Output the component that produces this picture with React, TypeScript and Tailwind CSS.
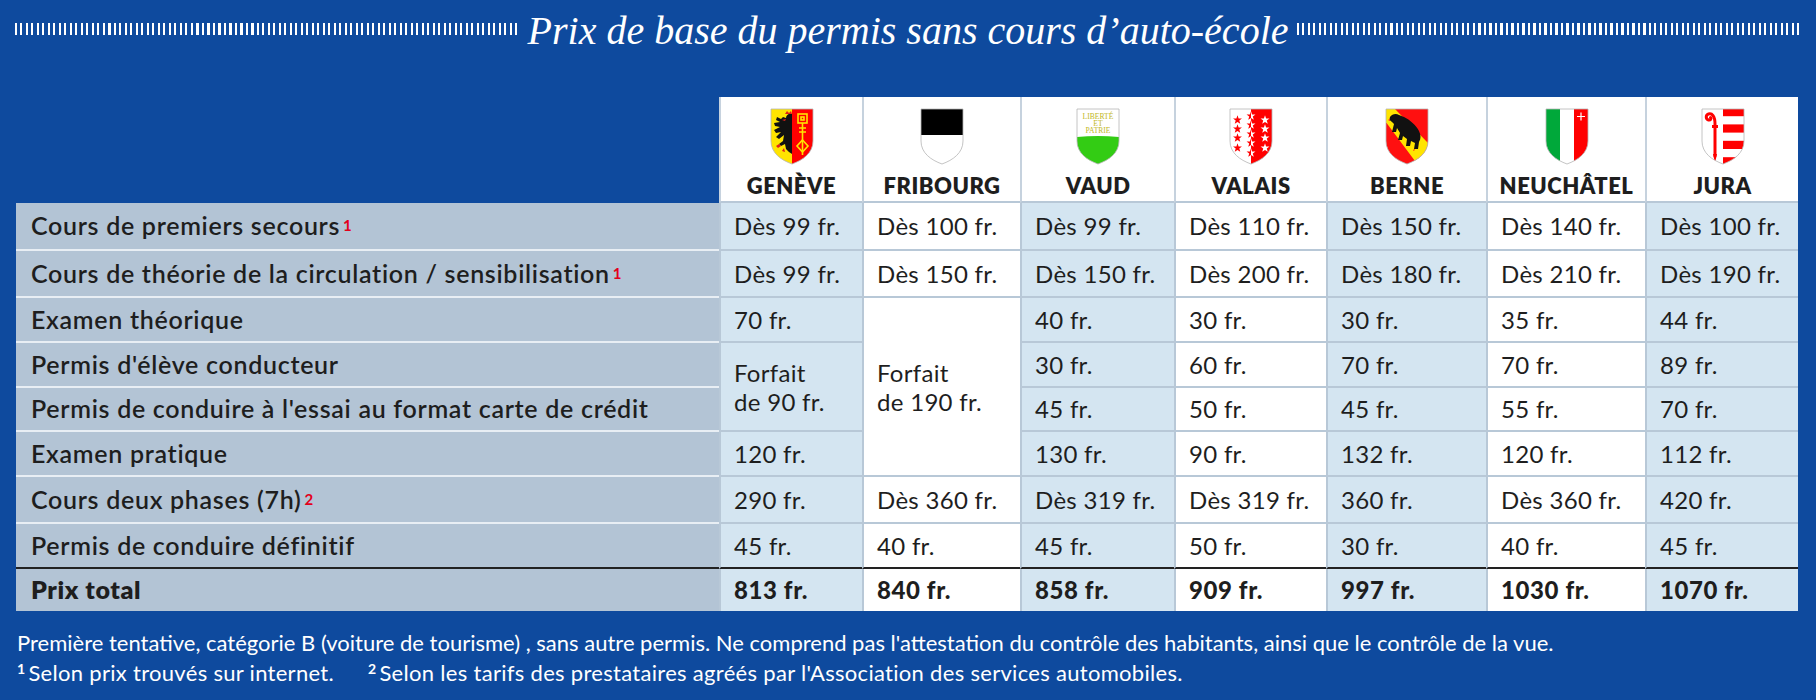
import React from "react";

const SHIELD = "M1 1H43V33C43 45 33 52 22 56C11 52 1 45 1 33Z";
const STAR = "M0 -3.6 L0.85 -1.17 L3.42 -1.11 L1.38 0.45 L2.12 2.91 L0 1.45 L-2.12 2.91 L-1.38 0.45 L-3.42 -1.11 L-0.85 -1.17Z";

function Shield({ id, children }: { id: string; children: React.ReactNode }) {
  return (
    <svg width="44" height="57" viewBox="0 0 44 57">
      <defs>
        <clipPath id={id}>
          <path d={SHIELD} />
        </clipPath>
      </defs>
      <g clipPath={`url(#${id})`}>{children}</g>
      <path d={SHIELD} fill="none" stroke="#b5b5b5" strokeWidth="0.8" />
    </svg>
  );
}

function Geneve() {
  return (
    <Shield id="ge">
      <rect x="0" y="0" width="22" height="57" fill="#ffe400" />
      <rect x="22" y="0" width="22" height="57" fill="#ff0000" />
      <path
        d="M22 6 C19 5 16 7 16 10 L13 9 L11 11 L7 9 L6 12 L10 14 L4 15 L5 18 L10 19 L4 22 L6 25 L11 24 L6 29 L9 31 L14 27 L13 33 L9 36 L11 38 L15 36 L16 41 L19 44 L22 46 Z"
        fill="#111"
      />
      <path d="M15 6 L17 3 L19 5 L21 3 L22 6 Z" fill="#e0201b" />
      <path d="M16 11 L12 12 L15 13 Z" fill="#e0201b" />
      <path d="M9 36 L6 38 L8 40 L11 38 Z M14 40 L12 43 L15 44 Z" fill="#e0201b" />
      <g fill="none" stroke="#ffe400" strokeWidth="1.6">
        <rect x="28" y="6" width="9" height="9" />
        <rect x="31" y="9" width="3" height="3" />
        <path d="M32.5 15 V47" />
        <path d="M32.5 32 L38 38 L32.5 44 L27 38 Z" />
        <path d="M29 20 H36 M29 24 H36" />
      </g>
    </Shield>
  );
}

function Fribourg() {
  return (
    <Shield id="fr">
      <rect x="0" y="0" width="44" height="57" fill="#fff" />
      <rect x="0" y="0" width="44" height="27" fill="#000" />
    </Shield>
  );
}

function Vaud() {
  return (
    <Shield id="vd">
      <rect x="0" y="0" width="44" height="57" fill="#fff" />
      <path d="M0 29 Q22 27 44 29 V57 H0 Z" fill="#33cc14" />
      <g fill="#c2b81c" fontFamily="'Liberation Serif', serif" fontSize="7.6" textAnchor="middle">
        <text x="22" y="10.5">LIBERTÉ</text>
        <text x="22" y="17.5">ET</text>
        <text x="22" y="24.5">PATRIE</text>
      </g>
    </Shield>
  );
}

function Valais() {
  const side = [12, 21, 30, 40];
  const mid = [8, 17, 26, 35, 45];
  return (
    <svg width="44" height="57" viewBox="0 0 44 57">
      <defs>
        <clipPath id="vs">
          <path d={SHIELD} />
        </clipPath>
        <clipPath id="vsl">
          <rect x="-20" y="-20" width="20" height="57" />
        </clipPath>
        <clipPath id="vsr">
          <rect x="0" y="-20" width="20" height="57" />
        </clipPath>
      </defs>
      <g clipPath="url(#vs)">
        <rect x="0" y="0" width="22" height="57" fill="#fff" />
        <rect x="22" y="0" width="22" height="57" fill="#ff0000" />
        {side.map((y) => (
          <path key={"l" + y} d={STAR} transform={`translate(8.5 ${y}) scale(1.3)`} fill="#ff0000" />
        ))}
        {side.map((y) => (
          <path key={"r" + y} d={STAR} transform={`translate(36 ${y}) scale(1.3)`} fill="#fff" />
        ))}
        {mid.map((y) => (
          <g key={"m" + y} transform={`translate(22 ${y}) scale(1.3)`}>
            <path d={STAR} fill="#ff0000" clipPath="url(#vsl)" />
            <path d={STAR} fill="#fff" clipPath="url(#vsr)" />
          </g>
        ))}
      </g>
      <path d={SHIELD} fill="none" stroke="#b5b5b5" strokeWidth="0.8" />
    </svg>
  );
}

function Berne() {
  return (
    <Shield id="be">
      <rect x="0" y="0" width="44" height="57" fill="#ff1010" />
      <path d="M0 0 L9 0 L44 36 L44 57 L33 57 L0 13 Z" fill="#ffe400" />
      <path
        d="M5 9 C7 6 11 5 14 7 L19 9 C25 12 31 17 34 23 C36 27 36 31 34 34 L33 41 L29 41 L30 35 L26 33 L25 38 L21 38 L22 31 L18 28 L17 32 L13 32 L15 25 L12 20 L11 24 L7 24 L9 16 L7 14 C5 13 4 11 5 9 Z"
        fill="#111"
      />
      <path d="M5 11 L3 12 L5 13 Z" fill="#ff1010" />
      <path d="M7 24 L6 26 L8 25 Z M13 32 L12 34 L14 33 Z M29 41 L28 43 L30 42 Z" fill="#ff1010" />
    </Shield>
  );
}

function Neuchatel() {
  return (
    <Shield id="ne">
      <rect x="0" y="0" width="15" height="57" fill="#00a83a" />
      <rect x="15" y="0" width="14" height="57" fill="#fff" />
      <rect x="29" y="0" width="15" height="57" fill="#ff0000" />
      <path d="M36 4.5 V12.5 M32 8.5 H40" stroke="#fff" strokeWidth="1.2" />
    </Shield>
  );
}

function Jura() {
  return (
    <Shield id="ju">
      <rect x="0" y="0" width="44" height="57" fill="#fff" />
      {[0, 2, 4, 6].map((i) => (
        <rect key={i} x="22" y={i * 8.2} width="22" height="8.2" fill="#ff0000" />
      ))}
      <g fill="none" stroke="#ff0000" strokeWidth="3" strokeLinecap="round">
        <path d="M14 48 V16 C14 8 11 5 7.5 6 C4.5 7 4.5 11 7.5 12 C9.5 12.5 10.5 10.5 9.5 9.5" />
      </g>
      <rect x="11" y="17" width="6" height="3" fill="#ff0000" />
      <path d="M12 46 L14 55 L16 46 Z" fill="#ff0000" />
    </Shield>
  );
}

const cantons = [
  { name: "GENÈVE", Flag: Geneve },
  { name: "FRIBOURG", Flag: Fribourg },
  { name: "VAUD", Flag: Vaud },
  { name: "VALAIS", Flag: Valais },
  { name: "BERNE", Flag: Berne },
  { name: "NEUCHÂTEL", Flag: Neuchatel },
  { name: "JURA", Flag: Jura },
];

const colBg = ["bg-[#d4e5f1]", "bg-white", "bg-[#d4e5f1]", "bg-white", "bg-[#d4e5f1]", "bg-white", "bg-[#d4e5f1]"];

const labels: { text: string; sup?: string }[] = [
  { text: "Cours de premiers secours", sup: "1" },
  { text: "Cours de théorie de la circulation / sensibilisation", sup: "1" },
  { text: "Examen théorique" },
  { text: "Permis d'élève conducteur" },
  { text: "Permis de conduire à l'essai au format carte de crédit" },
  { text: "Examen pratique" },
  { text: "Cours deux phases (7h)", sup: "2" },
  { text: "Permis de conduire définitif" },
  { text: "Prix total" },
];

const rowValues: (string | null)[][] = [
  ["Dès 99 fr.", "Dès 100 fr.", "Dès 99 fr.", "Dès 110 fr.", "Dès 150 fr.", "Dès 140 fr.", "Dès 100 fr."],
  ["Dès 99 fr.", "Dès 150 fr.", "Dès 150 fr.", "Dès 200 fr.", "Dès 180 fr.", "Dès 210 fr.", "Dès 190 fr."],
  ["70 fr.", "FORFAIT_FR", "40 fr.", "30 fr.", "30 fr.", "35 fr.", "44 fr."],
  ["FORFAIT_GE", null, "30 fr.", "60 fr.", "70 fr.", "70 fr.", "89 fr."],
  [null, null, "45 fr.", "50 fr.", "45 fr.", "55 fr.", "70 fr."],
  ["120 fr.", null, "130 fr.", "90 fr.", "132 fr.", "120 fr.", "112 fr."],
  ["290 fr.", "Dès 360 fr.", "Dès 319 fr.", "Dès 319 fr.", "360 fr.", "Dès 360 fr.", "420 fr."],
  ["45 fr.", "40 fr.", "45 fr.", "50 fr.", "30 fr.", "40 fr.", "45 fr."],
  ["813 fr.", "840 fr.", "858 fr.", "909 fr.", "997 fr.", "1030 fr.", "1070 fr."],
];

const rowStart = [
  "row-start-1",
  "row-start-2",
  "row-start-3",
  "row-start-4",
  "row-start-5",
  "row-start-6",
  "row-start-7",
  "row-start-8",
  "row-start-9",
];
const colStart = ["col-start-2", "col-start-3", "col-start-4", "col-start-5", "col-start-6", "col-start-7", "col-start-8"];

export default function App() {
  const cells: React.ReactNode[] = [];
  labels.forEach((l, r) => {
    const last = r === 8;
    const beforeTotal = r === 7;
    cells.push(
      <div
        key={"lab" + r}
        className={`col-start-1 ${rowStart[r]} flex items-center bg-[#b3c4d5] px-[15px] text-[#1e1e1e] ${
          last ? "font-extrabold text-[25px] tracking-[0.6px]" : "font-semibold text-[25px] tracking-[0.7px]"
        } ${last ? "" : beforeTotal ? "border-b-2 border-[#222]" : "border-b-2 border-[#e8eef4]"}`}
      >
        <span>
          {l.text}
          {l.sup && (
            <sup className="ml-[3px] text-[15px] font-bold text-[#e3001b] relative top-[-4px]">{l.sup}</sup>
          )}
        </span>
      </div>
    );
  });
  rowValues.forEach((vals, r) => {
    vals.forEach((v, c) => {
      if (v === null) return;
      const last = r === 8;
      const beforeTotal = r === 7;
      let span = "";
      let content: React.ReactNode = v;
      const bottom = last ? "" : beforeTotal ? "border-b-2 border-b-[#222]" : "border-b-2 border-b-[#b8c8d7]";
      if (v === "FORFAIT_FR") {
        span = "row-span-4";
        content = (
          <span className="leading-[29px]">
            Forfait
            <br />
            de 190 fr.
          </span>
        );
      } else if (v === "FORFAIT_GE") {
        span = "row-span-2";
        content = (
          <span className="leading-[29px]">
            Forfait
            <br />
            de 90 fr.
          </span>
        );
      }
      cells.push(
        <div
          key={`c${r}-${c}`}
          className={`${colStart[c]} ${rowStart[r]} ${span} flex items-center ${colBg[c]} border-l-2 border-l-[#b8c8d7] ${bottom} pl-[13px] text-[24px] text-[#1e1e1e] ${
            last ? "font-black tracking-[0.6px]" : "font-normal tracking-[0.3px]"
          }`}
        >
          {content}
        </div>
      );
    });
  });

  return (
    <div className="w-[1816px] h-[700px] bg-[#0e4a9e] overflow-hidden font-['Lato',_sans-serif] text-white">
      {/* Title */}
      <div className="flex items-center h-[58px] px-[15px] gap-[8px]">
        <div className="flex-1 h-[12px] bg-[image:repeating-linear-gradient(90deg,#ffffff_0px,#ffffff_2px,transparent_2px,transparent_5.5px)]" />
        <div className="font-['Liberation_Serif',_serif] italic text-[40px] leading-none whitespace-nowrap mt-[4px]">
          Prix de base du permis sans cours d’auto-école
        </div>
        <div className="flex-1 h-[12px] bg-[image:repeating-linear-gradient(90deg,#ffffff_0px,#ffffff_2px,transparent_2px,transparent_5.5px)]" />
      </div>

      <div className="mt-[39px] ml-[16px] w-[1782px]">
        {/* Header */}
        <div className="grid grid-cols-[703px_143px_158px_154px_152px_160px_159px_153px] h-[106px]">
          <div />
          {cantons.map(({ name, Flag }) => (
            <div
              key={name}
              className="flex flex-col items-center bg-white border-l-2 border-l-[#c6d2de] border-b-2 border-b-[#b8c8d7] pt-[11px]"
            >
              <Flag />
              <div className="mt-[10px] text-[22px] font-extrabold tracking-[0.5px] text-[#1e1e1e] leading-none">
                {name}
              </div>
            </div>
          ))}
        </div>
        {/* Body */}
        <div className="grid grid-cols-[703px_143px_158px_154px_152px_160px_159px_153px] grid-rows-[48px_47px_45px_45px_44px_45px_47px_45px_42px]">
          {cells}
        </div>
      </div>

      {/* Footer */}
      <div className="mt-[17px] ml-[17px] text-[22px] leading-[30px] text-white">
        <div>
          Première tentative, catégorie B (voiture de tourisme) , sans autre permis. Ne comprend pas l'attestation du
          contrôle des habitants, ainsi que le contrôle de la vue.
        </div>
        <div className="flex tracking-[0.3px]">
          <span>
            <sup className="text-[14px] font-bold mr-[3px]">1</sup>Selon prix trouvés sur internet.
          </span>
          <span className="ml-[34px]">
            <sup className="text-[14px] font-bold mr-[3px]">2</sup>Selon les tarifs des prestataires agréés par
            l'Association des services automobiles.
          </span>
        </div>
      </div>
    </div>
  );
}
